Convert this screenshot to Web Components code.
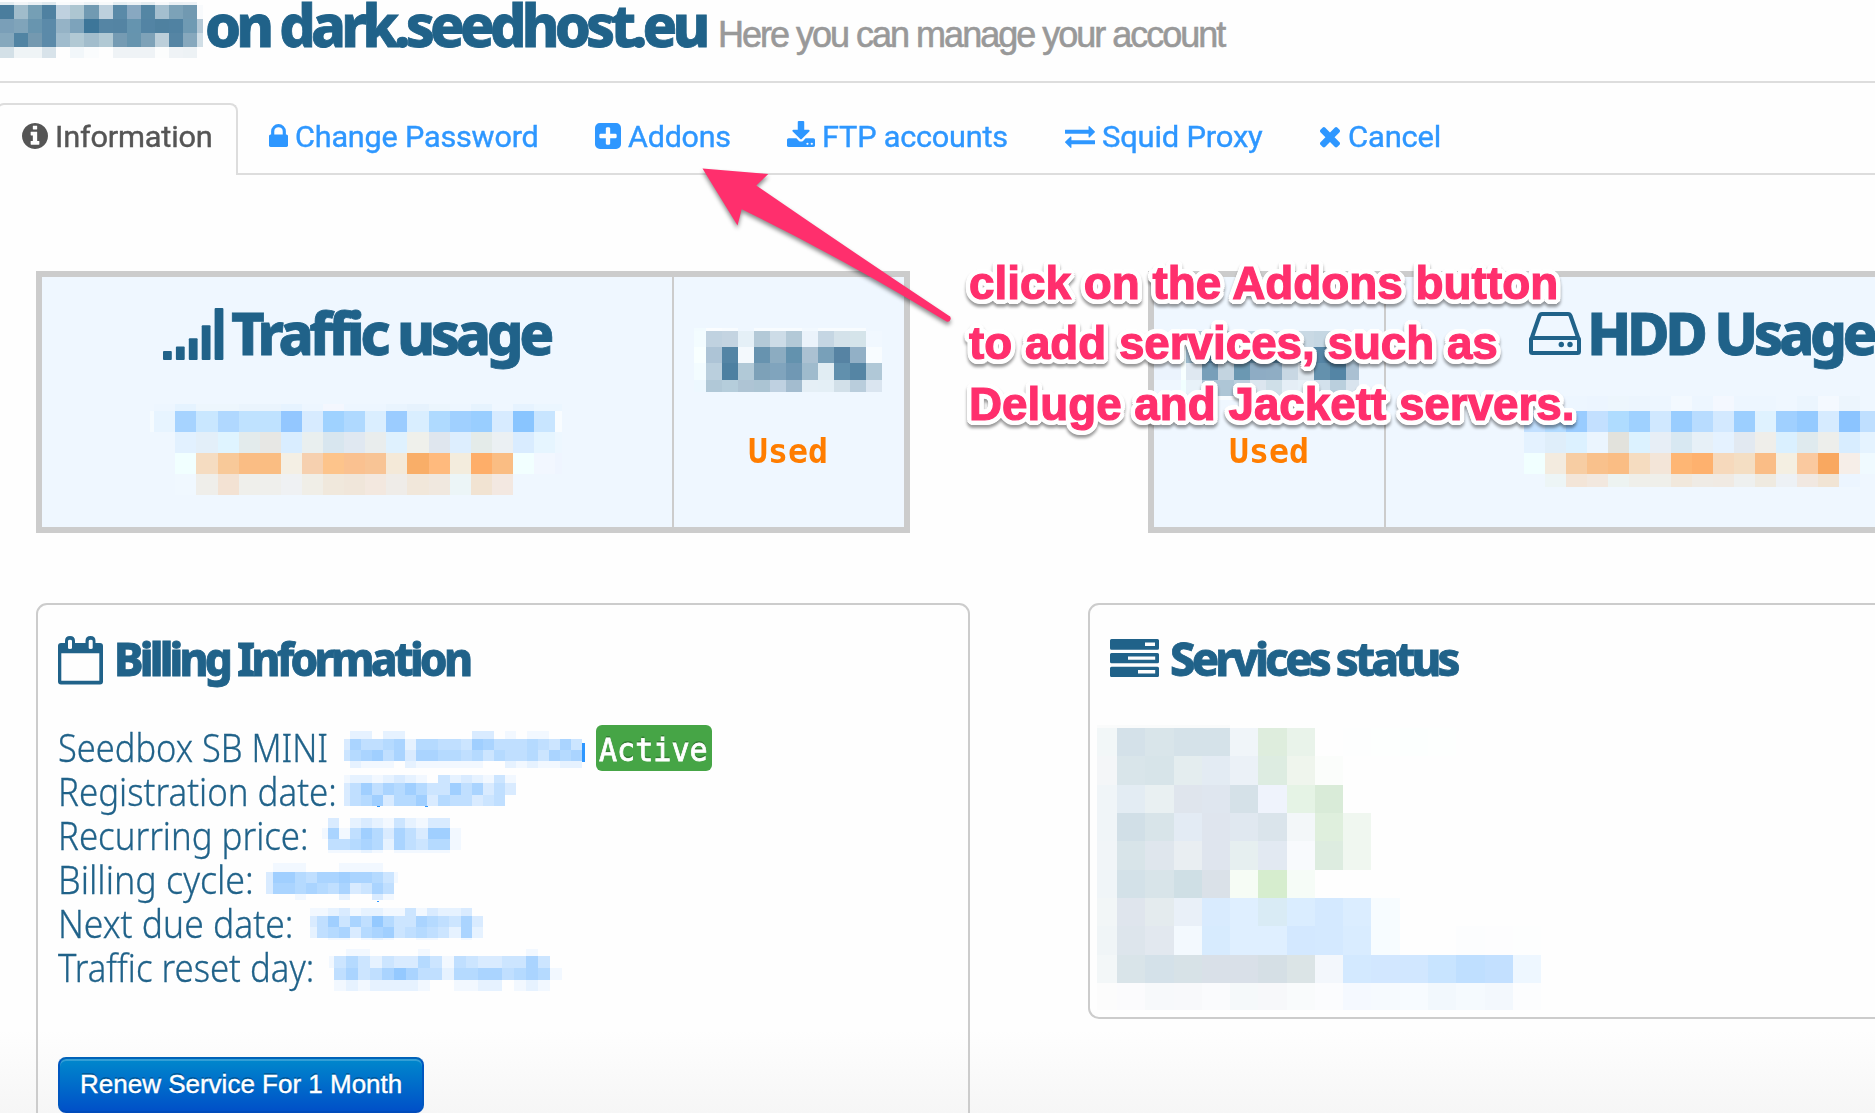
<!DOCTYPE html>
<html lang="en">
<head>
<meta charset="utf-8">
<title>Seedbox account</title>
<style>
html,body{margin:0;padding:0}
body{width:1875px;height:1113px;overflow:hidden;background:#fefefe linear-gradient(#fefefe 0,#fefefe 1030px,#f6f6f6 1113px);font-family:"Noto Sans",sans-serif}
</style>
</head>
<body>
<account-page></account-page>
<script>
const define = (name, html, setup) => customElements.define(name, class extends HTMLElement {
  connectedCallback() {
    if (this.shadowRoot) return;
    const root = this.attachShadow({ mode: 'open' });
    const tpl = document.createElement('template');
    tpl.innerHTML = typeof html === 'function' ? html(this) : html;
    root.append(tpl.content.cloneNode(true));
    if (setup) setup(this, root);
  }
});

/* Single line of text condensed or widened to a given width. */
define('fit-text', `<style>:host{display:inline-block;white-space:nowrap;flex:none}
span{display:inline-block;transform-origin:0 50%}</style><span><slot></slot></span>`,
(el, root) => {
  const span = root.querySelector('span'), w = +el.getAttribute('width');
  el.style.width = w + 'px';
  const fit = () => { if (span.offsetWidth) span.style.transform = `scaleX(${w / span.offsetWidth})`; };
  fit();
  document.fonts.ready.then(fit);
});

/* Icons: path, stretched to the size of the host. */
const ICONS = {
  info: [[128,128,1536,1536],'<path d="M1152 1376v-160q0-14-9-23t-23-9h-96v-512q0-14-9-23t-23-9h-320q-14 0-23 9t-9 23v160q0 14 9 23t23 9h96v320h-96q-14 0-23 9t-9 23v160q0 14 9 23t23 9h448q14 0 23-9t9-23zm-128-896v-160q0-14-9-23t-23-9h-192q-14 0-23 9t-9 23v160q0 14 9 23t23 9h192q14 0 23-9t9-23zm640 416q0 209-103 385.5t-279.5 279.5-385.5 103-385.5-103-279.5-279.5-103-385.5 103-385.5 279.5-279.5 385.5-103 385.5 103 279.5 279.5 103 385.5z"/>'],
  lock: [[320,128,1152,1408],'<path d="M640 768h512v-192q0-106-75-181t-181-75-181 75-75 181v192zm832 96v576q0 40-28 68t-68 28h-960q-40 0-68-28t-28-68v-576q0-40 28-68t68-28h32v-192q0-184 132-316t316-132 316 132 132 316v192h32q40 0 68 28t28 68z"/>'],
  plus: [[128,128,1536,1536],'<path d="M1408 960v-128q0-26-19-45t-45-19h-320v-320q0-26-19-45t-45-19h-128q-26 0-45 19t-19 45v320h-320q-26 0-45 19t-19 45v128q0 26 19 45t45 19h320v320q0 26 19 45t45 19h128q26 0 45-19t19-45v-320h320q26 0 45-19t19-45zm256-544v960q0 119-84.5 203.5t-203.5 84.5h-960q-119 0-203.5-84.5t-84.5-203.5v-960q0-119 84.5-203.5t203.5-84.5h960q119 0 203.5 84.5t84.5 203.5z"/>'],
  download: [[64,0,1664,1536],'<path d="M1344 1344q0-26-19-45t-45-19-45 19-19 45 19 45 45 19 45-19 19-45zm256 0q0-26-19-45t-45-19-45 19-19 45 19 45 45 19 45-19 19-45zm128-224v320q0 40-28 68t-68 28h-1472q-40 0-68-28t-28-68v-320q0-40 28-68t68-28h465l135 136q58 56 136 56t136-56l136-136h464q40 0 68 28t28 68zm-325-569q17 41-14 70l-448 448q-18 19-45 19t-45-19l-448-448q-31-29-14-70 17-39 59-39h256v-448q0-26 19-45t45-19h256q26 0 45 19t19 45v448h256q42 0 59 39z"/>'],
  exchange: [[0,288,1792,1344],'<path d="M1792 1184v192q0 13-9.5 22.5t-22.5 9.5h-1376v192q0 13-9.5 22.5t-22.5 9.5q-12 0-24-10l-319-320q-9-9-9-22 0-14 9-23l320-320q9-9 23-9 13 0 22.5 9.5t9.5 22.5v192h1376q13 0 22.5 9.5t9.5 22.5zm0-544q0 14-9 23l-320 320q-9 9-23 9-13 0-22.5-9.5t-9.5-22.5v-192h-1376q-13 0-22.5-9.5t-9.5-22.5v-192q0-13 9.5-22.5t22.5-9.5h1376v-192q0-14 9-23t23-9q12 0 24 10l319 319q9 9 9 23z"/>'],
  times: [[302,366,1188,1188],'<path d="M1490 1322q0 40-28 68l-136 136q-28 28-68 28t-68-28l-294-294-294 294q-28 28-68 28t-68-28l-136-136q-28-28-28-68t28-68l294-294-294-294q-28-28-28-68t28-68l136-136q28-28 68-28t68 28l294 294 294-294q28-28 68-28t68 28l136 136q28 28 28 68t-28 68l-294 294 294 294q28 28 28 68z"/>'],
  signal: [[0,0,60.5,52],'<rect x="0" y="43" width="8.8" height="9" rx="1"/><rect x="12.9" y="38.5" width="8.8" height="13.5" rx="1"/><rect x="25.8" y="30.2" width="8.8" height="21.8" rx="1"/><rect x="38.7" y="17.2" width="8.8" height="34.8" rx="1"/><rect x="51.6" y="0" width="8.8" height="52" rx="1"/>'],
  hdd: [[0,0,52,43],'<path d="M2 27.5v12q0 1.6 1.6 1.6h44.8q1.6 0 1.6-1.6v-12q0-1.6-1.6-1.6h-44.8q-1.6 0-1.6 1.6zM2.4 27l8-23q.7-2 2.6-2h26q1.900 0 2.600 2l8 23" fill="none" stroke="currentColor" stroke-width="4"/><circle cx="32.300" cy="32.500" r="2.700"/><circle cx="41" cy="32.500" r="2.700"/>'],
  calendar: [[0,0,45,48.5],'<path fill-rule="evenodd" d="M3 7h4V5q0-5 5-5t5 5v2h10.500V5q0-5 5-5t5 5v2H42q3 0 3 3v35.500q0 3-3 3H3q-3 0-3-3V10q0-3 3-3zM3.300 17.200v27.600h38V17.200zM10 5v7q0 1 2 1t2-1V5q0-1.300-2-1.300T10 5zM30.700 5v7q0 1 2 1t2-1V5q0-1.300-2-1.300t-2 1.300z"/>'],
  server: [[0,0,49,38],'<path fill-rule="evenodd" d="M1.500 0h46q1.500 0 1.500 1.500v7.700q0 1.500-1.500 1.500h-46q-1.500 0-1.500-1.500V1.500Q0 0 1.500 0zM35 3.600v3.500h10V3.600zM1.500 14h46q1.500 0 1.500 1.500v7.200q0 1.500-1.500 1.500h-46q-1.500 0-1.500-1.500v-7.200q0-1.500 1.500-1.500zM18 17.600v3.200h27.200v-3.200zM1.500 27.800h46q1.500 0 1.500 1.500v7.200q0 1.500-1.500 1.500h-46q-1.500 0-1.500-1.500v-7.200q0-1.500 1.500-1.500zM28 31v3.500h17.200V31z"/>']
};
define('ui-icon', el => {
  const [box, art] = ICONS[el.getAttribute('name')];
  return `<style>:host{display:block;flex:none;width:${el.getAttribute('w')}px;height:${el.getAttribute('h')}px}svg{display:block;width:100%;height:100%;overflow:visible}</style>
  <svg viewBox="${box.join(' ')}" preserveAspectRatio="none" fill="currentColor">${art}</svg>`;
});

/* Pixelated privacy blocks that cover private values. */
const BLUES = ['#fefefe','#f2f8ff','#e6f2ff','#d9ebff','#cce5ff','#c0dfff','#b5daff','#aad4ff','#a0cfff','#94c9ff'];
const fromDigits = s => [...s].map(c => BLUES[c]);
const hex = s => s.split(' ').map(c => c === '-' ? null : '#' + c);
const MOSAICS = {
  user: { cols:[14,14,14,14,14,14,15,14,14,14,14,14,14,14,6], rows:[3,14,14,14,11], cells:[
    'e4ecf0 f2f5f7 eaf0f4 e0e9ee fafbfc f6f8fa eef3f6 f8fafb e6eef2 edf2f5 e4ecf0 f6f8fa eaf0f4 ecf1f5 fefefe',
    '4a7d9d a0bccb 759fb5 4f81a1 bfd1df adc6d1 719ab2 bdd0dd 5a8aa8 88a8c1 5486a4 a4bfcf 7ca2b8 7199b1 f8fafc',
    '7a9fb8 80a4ba 6895af 5b8aa9 95b3c6 7da3bb 3d7699 5585a4 5484a3 6594af 5384a4 4f81a0 5082a2 6f9ab3 b4c8d6',
    '85a8bd 5184a3 7499b0 5b8aa9 a0bccd b1c9d4 a2bdcc b1c9d4 759bb3 6694ae 7ea2b8 bccfda 5585a4 86a8bd d0dee6',
    'd3e0e7 eff4f6 eff4f6 d8e3ea fefefe f2f7fa fafcfd fefefe eff3f6 eff3f6 eff3f6 fcfdfd eff3f6 edf2f5 fefefe'].map(hex) },
  traffic: { cols:[4,21.3,21.1,21.1,21.1,21.1,21.1,21.1,21.1,21.1,21.1,21.1,21.1,21.1,21.1,21.1,21.1,21.1,21.1,21.1,7], rows:[7,21,21,21,21], cells:[
    '- edf6ff e5f3ff edf6fd edf6fd eaf4fd eaf4fd e6f3ff edf6ff f4f7fe edf6ff edf6ff e9f4fe e6f2fd ebf5fd edf6ff e6f3fe eff7ff e6f3ff ebf6ff ebf6ff',
    'f5fbff e7f4ff a6d3ff c9e7ff b0d8ff bfe2ff bfe2ff 93c7ff d7ebff 9fd2ff afd9ff daeeff 9bccff d9eeff afdaff a0d0ff 99ceff d7ebff 89c5ff c8e5ff f8fcff',
    '- - e2f1ff e3eff9 dff4ff e3ebec e7e7e4 d9edff e9efef d8e6ef e0e8f1 e9eded dff1fe eff0eb dfe6ee ddeefe e4ebe9 ebf0f3 d9ecff e6f5ff edf7ff',
    '- - f1ffff f5dcc1 f8c999 fabd84 fabd82 f4efe4 f6d0af fdc48b fac190 f8c495 f4e9d8 f9ae68 ffba7d f3ecdd feae69 fabd83 f2ffff f2f7ff eff5ff',
    '- - f0f8ff efeeea f3e2d3 efefeb efefec eff1f3 f0eee7 f0e8dc f0e6da f3e8df efece8 f1e7da f0e8df ecf5f7 f1e3d2 f3e8e1 - - -'].map(hex) },
  trafficUsed: { cols:[12,16,16,16,16,16,16,16,16,16,16,16], rows:[3,16,16,17,12], cells:[
    'f2fbff fbfdff f8fcff eff7ff f8fcff f8fcff f8fcff f2f9ff f8fcff f8fcff f8fcff eff7ff',
    'f3fcff c0d2e0 c4d4e1 e5f0f7 b3c9d7 cddce7 b3c9d7 ebf3fb c5d6e3 d4e2ea d5e4ea f1f8ff',
    'f8ffff adc4d6 5485a5 f4f9fd 6793af 8cacc1 6392ae abc1d2 78a0b9 5683a3 92b0c6 f8fcff',
    'f3fcff bacfdd 4d80a1 b1c9d7 7da1b8 80a4bd 7098b4 9fbbcd e1edf3 6190ad 5585a4 b0c8d7',
    'edf8ff b0c8d7 b5cddb aec4d4 abc4d3 bfd1e1 a3bccf e5eff6 e4eff6 d2e0e9 b9cddc dae5f0'].map(hex) },
  hddUsed: { cols:[27,5,16,16,16,16,16,16,16,16,16,16,13], rows:[16,16,17,16,4], cells:[
    'eff7ff f2faff b4cad8 bfd2df c5d7e1 c2d5df bfd2df c4d6e1 d5e1e9 c9d9e4 c5d7e3 d1dfe8 e5eff6',
    'eff7ff f2ffff 9cbacd 5988a7 a8c0d0 5c8ba8 6794b0 5585a5 90b0c3 a0bacd 5585a5 5485a4 b0c8d7',
    'ebf3fd f8ffff dfe8f1 789fb9 c3d4e0 6b98b2 8eacc4 8fadc4 c8d7e3 dfe8ef 6491ad 5485a5 aac0d2',
    'eff7ff f1ffff e8f2f9 aec6d6 aec6d6 bdd0df dce6ef cfdfe8 e5eef6 e7f1f8 d3e1ec bacfdd d9e4ee',
    '- f2f9ff f6fbff f8fcff f8fcff f8fcff f4faff f3f9ff - - - - -'].map(hex) },
  hdd: { cols:[21,21,21,21,21,21,21,21,21,21,21,21,21,21,21,21,21], rows:[15,21,21,21,13], cells:[
    'edf6ff edf5ff edf6ff ecf5ff edf6fd ecf5fe edf6ff f3f9ff edf6ff f4f8ff edf6ff edf6ff eff7ff ebf5fe f4f9ff ecf5fd eff7ff',
    'c2e0ff b2dbff 99ccff c3e0ff afdcff 9fd1ff d0e8ff 99cdff b8dcff d3e9ff 9ccfff dff2ff a0d0ff 94caff d6ebff 8bc4ff bfdfff',
    'e4f2ff dfeefa dcf1ff ebf5fe e2e2dc dcf2ff e7eef6 d8e8f2 e7f0f7 e5f2ff e2e9f1 efeeea daf0ff dfeaee edeeeb d8edff e5f3ff',
    'f1ffff f3ebdf f7cda3 f9c18c fabd84 f5dcc0 f3e5d8 feb674 feb16e f6d9bc f4dec3 fabd86 f4efe2 fac99f f9a860 f6eee8 f0faff',
    'eff7ff edf5f6 f3e5d8 f2e8df edf3f1 efefea efefea f1e8dc efebe5 f0eae3 eef0ef efeae0 edf1f5 f1e8e1 f1e4d4 ecf5ff eff7ff'].map(hex) },
  host: { cols:[6,...Array(21).fill(11.06)], rows:[8.3,10.7,11.3,7], ticks:[[238.3,11.7,3,19]], cells:['0220220000003301011000','3755672665548755565474','4678573776656465564767','0211102111111002121122'].map(fromDigits) },
  registered: { cols:[6,...Array(15).fill(11.06)], rows:[8.3,11.3,11], ticks:[[33,30.7,3,1],[81,30.7,3,1]], cells:['1221232104232141','3585768644857353','3568366836553450'].map(fromDigits) },
  price: { cols:[6,...Array(12).fill(11.06)], rows:[9.7,11.3,11,2.7], cells:['0302321421330','1715863753881','0556762754661','0111210111110'].map(fromDigits) },
  cycle: { cols:[7,...Array(11).fill(11.03),4], rows:[9,11,11,6], ticks:[[110.5,38,2,1]], cells:['0111000111100','3886577877641','3776765734750','0001000200310'].map(fromDigits) },
  due: { cols:[7,...Array(15).fill(11.04)], rows:[7.7,11.3,10.7,2.7], cells:['1123122114132230','3584759644765473','2567367845654272','0011012100110010'].map(fromDigits) },
  reset: { cols:[5,...Array(19).fill(12)], rows:[7,12,12,11], cells:['00110000100000000100','14642433641543344740','05745797552667756761','01212222100112201210'].map(fromDigits) },
  services: { cols:[20,...Array(15).fill(28.27)], rows:[3,28.3,28.7,28,28.3,28.7,28,28.3,28.7,28.3,26.3], cells:[
    'fafbfb fafbfb fafbfb fafbfb fafbfb',
    'f2f7f8 d4e1e9 d9e5ea d5e2e9 d5e2e9 f0f5f9 deeddd e9f3ea - fdfefe fdfffe fcfffe fdfffe',
    'f4f6f8 d9e5ea d7e4e9 e4edef e3ebf3 ebf1f7 ddece1 eff5ed fbfdfb',
    'f0f5f8 e3ecf3 e9f0f2 dfe5ed dfe6ef d5e1e8 eff3fc e5f3e5 d9ebd8',
    'f0f5f8 d1dfe7 d8e4e9 e3ebf4 dfe5ee e0e8f0 dae4eb f3f7f9 dfefdd f0f7f0',
    'f1f5f8 d8e4e9 dfe6ed e9eef2 dfe5ee e6eff0 e2e9f2 f8fafd ddece0 f0f7f0',
    'f0f5f8 d3e1e8 d8e4e9 cfdfe5 dae1e8 f6fcf5 d6edce f6fcf7',
    'f2f6f7 dfe5ed e4ebee e9f0f8 d9ebfe dfefff d9ebf5 daedff d4e9ff dbedff f7fcff',
    'f0f5f7 dde5ec e2e8ef f3f9fe d7ebfe dfefff dfefff d3e8ff d4e9ff d9ecff f7fcff - - fcfdfe fdfdfe fdfefe',
    'f3f7f8 d9e4e9 d4e1e9 d7e2e7 d9e0e8 d9e0e8 d5dfe5 dbe4e6 f3f7fc d3e9ff d2e7ff d1e7ff c8e4ff bfdfff c3e0ff eef7ff',
    'fcfcfc fbfbfd f7f9fb f8f9fb fafbfd f5f9fa f7f8fa f9fbfc fbfcfe f5f9ff f6fafe f7fbff f2f8fd f5fafe f3f8fd fcfdfe'].map(hex) }
};
define('pixel-mosaic', el => {
  const m = MOSAICS[el.getAttribute('name')];
  let y = 0, out = '';
  m.rows.forEach((h, r) => {
    let x = 0;
    m.cols.forEach((w, c) => {
      const f = m.cells[r][c];
      if (f) out += `<rect x="${x}" y="${y}" width="${w}" height="${h}" fill="${f}"/>`;
      x += w;
    });
    y += h;
  });
  (m.ticks || []).forEach(t => out += `<rect x="${t[0]}" y="${t[1]}" width="${t[2]}" height="${t[3]}" fill="#2e97ff"/>`);
  const W = m.cols.reduce((a, b) => a + b), H = y;
  return `<style>:host{display:block;flex:none;width:${W}px;height:${H}px}svg{display:block;overflow:visible}</style><svg width="${W}" height="${H}" shape-rendering="crispEdges">${out}</svg>`;
});

define('page-header', `<style>
:host{display:flex;align-items:baseline;height:81px;border-bottom:2px solid #ddd;color:#206289}
pixel-mosaic{align-self:flex-start;margin-top:2px}
h1{margin:0 0 0 2px;font:800 59px/49.400px "Noto Sans",sans-serif;letter-spacing:-5px;-webkit-text-stroke:.8px #206289}
small{margin-left:12px;font:36px/40px "Liberation Sans",sans-serif;letter-spacing:-2px;color:#999;-webkit-text-stroke:.6px #999}
</style><pixel-mosaic name="user"></pixel-mosaic>
<h1><fit-text width="501">on dark.seedhost.eu</fit-text></h1>
<small><fit-text width="506">Here you can manage your account</fit-text></small>`);

define('nav-tab', el => `<style>
:host{display:flex;align-items:flex-start;box-sizing:border-box;height:72px;padding-top:13.700px;color:#2e97ff;font:30px/40px Roboto,sans-serif;letter-spacing:-.2px;margin-left:${el.getAttribute('gap')}px}
:host([active]){margin-left:-4px;width:242px;height:72px;padding:11.700px 0 0 24px;border:2px solid #ddd;border-bottom:0;border-radius:8px 8px 0 0;background:#fefefe;color:#555}
ui-icon{margin-top:${el.getAttribute('drop')}px}
fit-text{margin-left:${el.getAttribute('space')}px;-webkit-text-stroke:.4px currentColor}
</style><ui-icon name="${el.getAttribute('icon')}" w="${el.getAttribute('iw')}" h="${el.getAttribute('ih')}"></ui-icon><fit-text width="${el.getAttribute('width')}"><slot></slot></fit-text>`);

define('nav-tabs', `<style>:host{display:flex;height:72px;margin-top:20px;background:linear-gradient(#ddd,#ddd) 0 70px/100% 2px no-repeat}</style>
<nav-tab active icon="info" iw="26" ih="26" drop="6.500" space="7" width="158">Information</nav-tab>
<nav-tab gap="31" icon="lock" iw="19" ih="23" drop="7.500" space="7" width="244">Change Password</nav-tab>
<nav-tab gap="56" icon="plus" iw="26" ih="26" drop="6.500" space="7" width="102.500">Addons</nav-tab>
<nav-tab gap="56.500" icon="download" iw="28" ih="26" drop="4.700" space="6.500" width="186">FTP accounts</nav-tab>
<nav-tab gap="57" icon="exchange" iw="30" ih="22" drop="9.500" space="7" width="161">Squid Proxy</nav-tab>
<nav-tab gap="57.500" icon="times" iw="20" ih="20.500" drop="10.200" space="8" width="93">Cancel</nav-tab>`);

define('usage-panel', `<style>
:host{display:flex;flex:none;box-sizing:border-box;width:874px;height:262px;border:6px solid #ccc;background:#eff7ff}
:host([reverse]){flex-direction:row-reverse}
.main{width:630px}.side{width:230px}.rule{width:2px;background:#ccc}
</style><div class="main"><slot></slot></div><div class="rule"></div><div class="side"><slot name="side"></slot></div>`);

define('usage-title', `<style>:host{display:flex;align-items:flex-start;height:60px;padding-top:24.700px;color:#206289;font:800 59px/61px "Noto Sans",sans-serif;letter-spacing:-4.500px;-webkit-text-stroke:.8px #206289}ui-icon{-webkit-text-stroke:0}</style><slot></slot>`);

define('used-label', `<style>:host{display:block;font:700 34px/40px "DejaVu Sans Mono",monospace;color:#ff7d00}</style><fit-text width="80">Used</fit-text>`);

define('info-card', `<style>
:host{display:block;flex:none;box-sizing:border-box;width:934px;border:2px solid #ccc;border-radius:11px;padding:28.400px 20px 0}
header{display:flex;align-items:flex-start;height:50px;color:#206289;font:800 47px/51px "Noto Sans",sans-serif;letter-spacing:-4px}
::slotted(fit-text){-webkit-text-stroke:.8px #206289}
</style><header><slot name="title"></slot></header><slot></slot>`);

define('info-line', el => `<style>
:host{display:flex;align-items:flex-start;height:44px;color:#206289;font:300 38px/44px "Noto Sans",sans-serif}
.label{flex:none;margin-top:.5px;height:43px;width:${el.getAttribute('column')}px;-webkit-text-stroke:.3px #206289}
.value{display:flex;align-items:flex-start;margin-top:${el.getAttribute('drop')}px}
</style><div class="label"><fit-text width="${el.getAttribute('width')}">${el.getAttribute('label')}</fit-text></div><div class="value"><slot></slot></div>`);

define('status-badge', `<style>:host{display:block;box-sizing:border-box;width:116px;height:46px;margin:-6px 0 0 14px;padding-left:3px;border-radius:6px;background:#46a546;color:#fff;font:32px/51px "DejaVu Sans Mono",monospace;-webkit-text-stroke:.8px #fff;text-shadow:0 -2px 0 rgba(0,0,0,.25)}</style><fit-text width="109"><slot></slot></fit-text>`);

define('action-button', `<style>button{display:block;box-sizing:border-box;width:366px;height:56px;margin:68.700px 0 0;padding:0 0 3px 20px;text-align:left;border:2px solid #06b;border-color:#0062b8 #0057c0 #004bbb;border-radius:8px;background:linear-gradient(#08c,#0050c8);box-shadow:inset 0 2px 0 rgba(255,255,255,.2);color:#fff;font:26px/46px "Liberation Sans",sans-serif;-webkit-text-stroke:.4px #fff;text-shadow:0 -2px 0 rgba(0,0,0,.25)}</style><button><fit-text width="322"><slot></slot></fit-text></button>`);

/* Callout drawn over the page: arrow and outlined caption. */
const ring = [5, 3].flatMap(r => Array.from({ length: 20 }, (_, i) => {
  const a = i * Math.PI / 10;
  return `${(r * Math.cos(a)).toFixed(2)}px ${(r * Math.sin(a)).toFixed(2)}px 0 #fff`;
})).join(',');
define('callout-note', `<style>
:host{position:absolute;left:0;top:0;width:1875px;height:1113px;pointer-events:none;overflow:hidden}
svg{position:absolute;left:0;top:0;filter:drop-shadow(0 3px 2px rgba(0,0,0,.45))}
div{position:absolute;left:969px;top:252.500px;display:flex;flex-direction:column;font:700 46px/60.500px "Liberation Sans",sans-serif;color:#ff2f6d;-webkit-text-stroke:1.200px #ff2f6d;text-shadow:${ring};filter:drop-shadow(0 3px 1.500px rgba(0,0,0,.4))}
</style><svg width="960" height="340"><path fill="#ff2f6d" d="M702.500 168.500 768.300 174 756.300 185.500Q850 250 948.500 315.500A3 3 0 0 1 946.500 321.500Q840 257 741.700 209.300L737.500 225.500Z"/></svg>
<div><fit-text width="589">click on the Addons button</fit-text><fit-text width="529">to add services, such as</fit-text><fit-text width="606">Deluge and Jackett servers.</fit-text></div>`);

define('account-page', `<style>
:host{display:block;position:relative;width:1875px;height:1113px;overflow:hidden}
.row{display:flex;align-items:flex-start}
</style>
<page-header></page-header>
<nav-tabs></nav-tabs>
<div class="row" style="margin-top:96px;padding-left:36px;gap:238px">
  <usage-panel>
    <usage-title><ui-icon name="signal" w="60.500" h="52" style="margin:6px 0 0 121px"></ui-icon><fit-text width="319" style="margin-left:7px">Traffic usage</fit-text></usage-title>
    <pixel-mosaic name="traffic" style="margin:42.300px 0 0 108px"></pixel-mosaic>
    <pixel-mosaic slot="side" name="trafficUsed" style="margin:51px 0 0 20px"></pixel-mosaic>
    <used-label slot="side" style="margin:38.500px 0 0 74px"></used-label>
  </usage-panel>
  <usage-panel reverse>
    <usage-title><ui-icon name="hdd" w="52" h="43" style="margin:10.300px 0 0 143px"></ui-icon><fit-text width="287" style="margin-left:6px">HDD Usage</fit-text></usage-title>
    <pixel-mosaic name="hdd" style="margin:34.300px 0 0 138px"></pixel-mosaic>
    <pixel-mosaic slot="side" name="hddUsed" style="margin-top:54px"></pixel-mosaic>
    <used-label slot="side" style="margin:30.500px 0 0 75px"></used-label>
  </usage-panel>
</div>
<div class="row" style="margin-top:70px;padding-left:36px;gap:118px">
  <info-card style="height:620px">
    <ui-icon slot="title" name="calendar" w="45" h="48.500" style="margin-top:2.300px"></ui-icon>
    <fit-text slot="title" width="355" style="margin-left:11px">Billing Information</fit-text>
    <div style="height:41px"></div>
    <info-line label="Seedbox SB MINI" width="270" column="286" drop="7"><pixel-mosaic name="host"></pixel-mosaic><status-badge>Active</status-badge></info-line>
    <info-line label="Registration date:" width="279" column="286" drop="6.700"><pixel-mosaic name="registered"></pixel-mosaic></info-line>
    <info-line label="Recurring price:" width="251" column="264" drop="5.700"><pixel-mosaic name="price"></pixel-mosaic></info-line>
    <info-line label="Billing cycle:" width="196" column="208" drop="6.700"><pixel-mosaic name="cycle"></pixel-mosaic></info-line>
    <info-line label="Next due date:" width="235" column="252" drop="8"><pixel-mosaic name="due"></pixel-mosaic></info-line>
    <info-line label="Traffic reset day:" width="256" column="271" drop="4.700"><pixel-mosaic name="reset"></pixel-mosaic></info-line>
    <action-button>Renew Service For 1 Month</action-button>
  </info-card>
  <info-card style="height:416px">
    <ui-icon slot="title" name="server" w="49" h="38" style="margin-top:5.600px"></ui-icon>
    <fit-text slot="title" width="287" style="margin-left:11px">Services status</fit-text>
    <pixel-mosaic name="services" style="margin:41.600px 0 0 -13px"></pixel-mosaic>
  </info-card>
</div>
<callout-note></callout-note>`);
</script>
</body>
</html>
